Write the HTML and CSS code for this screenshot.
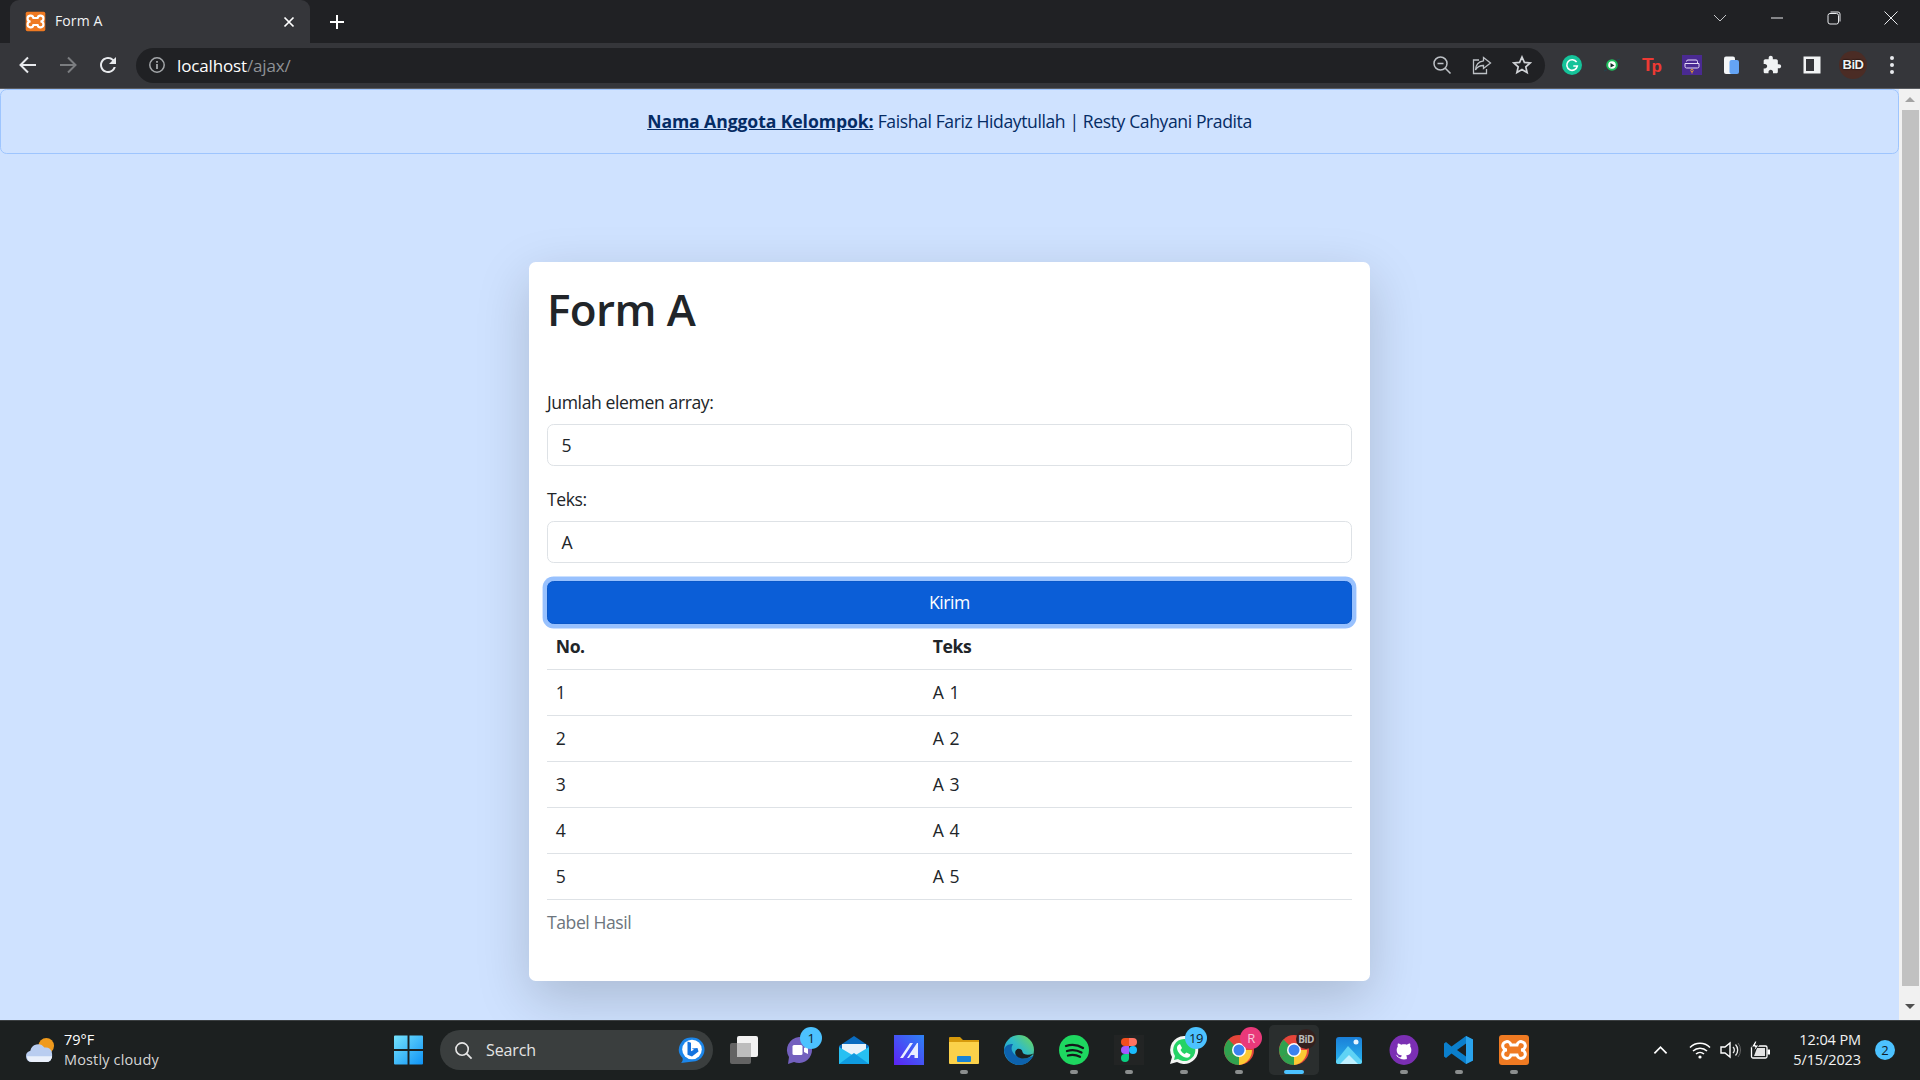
FILE: index.html
```html
<!DOCTYPE html>
<html lang="id">
<head>
<meta charset="utf-8">
<title>Form A</title>
<link rel="stylesheet" href="styles.css">
</head>
<body>
<header class="browser">
  <div class="tabstrip">
    <div class="tab">
      <svg class="favicon" viewBox="0 0 30 30"><rect x="1" y="1" width="28" height="28" rx="2.500" fill="#ef7a22"/><path d="M12 10H18A4.200 4.200 0 1 1 22 15 4.200 4.200 0 1 1 18 20H12A4.200 4.200 0 1 1 8 15 4.200 4.200 0 1 1 12 10Z" fill="none" stroke="#fff" stroke-width="3"/></svg>
      <span class="tab-title">Form A</span>
      <svg class="tab-close" viewBox="0 0 12 12"><path d="M1.500 1.500l9 9M10.500 1.500l-9 9" stroke="#fff" stroke-width="1.700"/></svg>
    </div>
    <svg class="new-tab" viewBox="0 0 16 16"><path d="M8 1v14M1 8h14" stroke="#fff" stroke-width="2"/></svg>
    <div class="win-controls">
      <svg class="win-ctl" viewBox="0 0 14 14"><path d="M1 4l6 6 6-6" fill="none" stroke="#c4c6c9" stroke-width="1"/></svg>
      <svg class="win-ctl" viewBox="0 0 14 14"><path d="M1 7h12" stroke="#e8eaed" stroke-width="1"/></svg>
      <svg class="win-ctl" viewBox="0 0 14 14"><rect x="1" y="2.500" width="10.500" height="10.500" rx="2" fill="none" stroke="#e8eaed"/><path d="M3.500 1h7.500a2 2 0 0 1 2 2v7.500" fill="none" stroke="#e8eaed"/></svg>
      <svg class="win-ctl" viewBox="0 0 14 14"><path d="M.5.5l13 13M13.500.5l-13 13" stroke="#e8eaed" stroke-width="1"/></svg>
    </div>
  </div>
  <div class="toolbar">
    <svg class="nav-icon" viewBox="0 0 24 24"><path d="M20 12H5M12 4.500L4.500 12l7.500 7.500" fill="none" stroke="#e8eaed" stroke-width="2"/></svg>
    <svg class="nav-icon" viewBox="0 0 24 24"><path d="M4 12h15M12 4.500l7.500 7.500-7.500 7.500" fill="none" stroke="#7b7d80" stroke-width="2"/></svg>
    <svg class="nav-icon" viewBox="0 0 24 24"><path d="M17.650 6.350A7.958 7.958 0 0 0 12 4c-4.420 0-7.990 3.580-7.990 8s3.570 8 7.990 8c3.730 0 6.840-2.550 7.730-6h-2.080A5.990 5.990 0 0 1 12 18c-3.310 0-6-2.690-6-6s2.690-6 6-6c1.660 0 3.140.690 4.220 1.780L13 11h7V4l-2.350 2.350z" fill="#e8eaed"/></svg>
    <div class="omnibox">
      <svg class="info" viewBox="0 0 18 18"><circle cx="9" cy="9" r="7.200" fill="none" stroke="#a4a7aa" stroke-width="1.500"/><path d="M9 8v5M9 5v1.800" stroke="#a4a7aa" stroke-width="1.800"/></svg>
      <span class="url"><span class="url-host">localhost</span>/ajax/</span>
      <div class="omni-actions">
        <svg class="omni-icon" viewBox="0 0 20 20"><circle cx="8.500" cy="8.500" r="6.500" fill="none" stroke="#bdc1c6" stroke-width="1.500"/><path d="M5.500 8.500h6M13.300 13.300l5.200 5.200" stroke="#bdc1c6" stroke-width="1.600"/></svg>
        <svg class="omni-icon" viewBox="0 0 20 20"><path d="M11.500 2.500l7 5.500-7 5.500V10.500C7.500 10.500 5 12 3.500 15c.2-5 3-8.500 8-9.200z" fill="none" stroke="#bdc1c6" stroke-width="1.300"/><path d="M7 5H1.500v13.500h13V14" fill="none" stroke="#bdc1c6" stroke-width="1.300"/></svg>
        <svg class="omni-icon" viewBox="0 0 20 20"><path d="M10 2l2.400 5.400 5.800.6-4.400 3.900 1.300 5.700L10 14.600l-5.100 3 1.300-5.700L1.800 8l5.800-.6z" fill="none" stroke="#d0d3d7" stroke-width="1.700"/></svg>
      </div>
    </div>
    <div class="extensions">
      <span class="ext"><svg viewBox="0 0 20 20"><circle cx="10" cy="10" r="10" fill="#15c39a"/><path d="M14.600 7.200A5.300 5.300 0 1 0 15.300 11h-4" fill="none" stroke="#fff" stroke-width="1.600"/></svg></span>
      <span class="ext"><svg viewBox="0 0 20 20"><circle cx="10" cy="10" r="5.800" fill="#1fbf5c"/><circle cx="10" cy="10" r="3.800" fill="#fff"/><path d="M8.500 8l4 2.500-4 2z" fill="#14302a"/><path d="M15 5l3-1M2 16l3-1" stroke="#27424c" stroke-width="1.200"/></svg></span>
      <span class="ext ext-tp"><span class="tp-t">T</span><span class="tp-p">p</span></span>
      <span class="ext"><svg viewBox="0 0 20 20"><rect width="20" height="20" fill="#4a2a92"/><path d="M4.500 6.500a1.500 1.500 0 0 1 1.500-1.500h8a1.500 1.500 0 0 1 1.500 1.500V8M3 8.500h14v3a1.500 1.500 0 0 1-1.500 1.500h-11A1.500 1.500 0 0 1 3 11.500z" fill="none" stroke="#e6dcf8" stroke-width="1"/><circle cx="10" cy="15.500" r="1.200" fill="none" stroke="#e39c33"/><path d="M10 16.500v2" stroke="#e39c33"/></svg></span>
      <span class="ext"><svg viewBox="0 0 20 20"><rect x="2" y="1.500" width="11" height="17.500" rx="2" fill="#f4f6f8"/><rect x="7.500" y="5" width="9.500" height="14" rx="2" fill="#64a4f5"/></svg></span>
      <span class="ext"><svg viewBox="0 0 24 24"><path d="M20.500 11H19V7c0-1.100-.9-2-2-2h-4V3.500C13 2.120 11.880 1 10.500 1S8 2.120 8 3.500V5H4c-1.100 0-1.990.9-1.990 2v3.800H3.500c1.490 0 2.700 1.210 2.700 2.700s-1.210 2.700-2.700 2.700H2V20c0 1.100.9 2 2 2h3.800v-1.500c0-1.490 1.210-2.700 2.700-2.700 1.490 0 2.700 1.210 2.700 2.700V22H17c1.100 0 2-.9 2-2v-4h1.500c1.380 0 2.500-1.120 2.500-2.500S21.880 11 20.500 11z" fill="#f1f3f4"/></svg></span>
      <span class="ext"><svg viewBox="0 0 20 20"><path fill-rule="evenodd" d="M1.500 1.500h17v17h-17zM4 4v12h8V4z" fill="#f1f3f4"/></svg></span>
      <span class="avatar">BiD</span>
      <svg class="ext-menu" viewBox="0 0 6 20"><circle cx="3" cy="3" r="2" fill="#e8eaed"/><circle cx="3" cy="10" r="2" fill="#e8eaed"/><circle cx="3" cy="17" r="2" fill="#e8eaed"/></svg>
    </div>
  </div>
</header>

<div class="viewport">
  <main class="page">
    <div class="alert"><a class="alert-link" href="#">Nama Anggota Kelompok:</a> Faishal Fariz Hidaytullah | Resty Cahyani Pradita</div>
    <section class="card">
      <h1 class="title">Form A</h1>
      <form class="form">
        <label class="label" for="jumlah">Jumlah elemen array:</label>
        <input class="input" id="jumlah" value="5">
        <label class="label" for="teks">Teks:</label>
        <input class="input input-last" id="teks" value="A">
        <button class="btn" type="button">Kirim</button>
      </form>
      <table class="table">
        <caption class="caption">Tabel Hasil</caption>
        <thead><tr><th class="col-no">No.</th><th>Teks</th></tr></thead>
        <tbody>
          <tr><td>1</td><td>A 1</td></tr>
          <tr><td>2</td><td>A 2</td></tr>
          <tr><td>3</td><td>A 3</td></tr>
          <tr><td>4</td><td>A 4</td></tr>
          <tr><td>5</td><td>A 5</td></tr>
        </tbody>
      </table>
    </section>
  </main>
  <aside class="scrollbar">
    <span class="arrow-up"></span>
    <span class="thumb"></span>
    <span class="arrow-down"></span>
  </aside>
</div>

<footer class="taskbar">
  <div class="weather">
    <svg class="weather-icon" viewBox="0 0 34 30"><circle cx="23" cy="10" r="8" fill="#f09a1c"/><path d="M8 27a6 6 0 0 1-1.500-11.800A8 8 0 0 1 21 12a6.500 6.500 0 0 1 8 6.500V21a6 6 0 0 1-6 6z" fill="#b9cdf0"/><path d="M3 21h26a6 6 0 0 1-6 6H8a6 6 0 0 1-5-6z" fill="#eaf0fb"/></svg>
    <div class="weather-text"><span class="temp">79°F</span><span class="cond">Mostly cloudy</span></div>
  </div>
  <div class="tb-app">
    <svg class="app-icon win" viewBox="0 0 30 30"><defs><linearGradient id="wg" x1="0" y1="0" x2="1" y2="1"><stop offset="0" stop-color="#76e3fd"/><stop offset="1" stop-color="#0f93f5"/></linearGradient></defs><path d="M0 1a1 1 0 0 1 1-1h13v14H0zM16 0h13a1 1 0 0 1 1 1v13H16zM0 16h14v14H1a1 1 0 0 1-1-1zM16 16h14v13a1 1 0 0 1-1 1H16z" fill="url(#wg)"/></svg>
  </div>
  <div class="search">
    <svg class="search-glass" viewBox="0 0 20 20"><circle cx="8.500" cy="8.500" r="6.500" fill="none" stroke="#e6e6e6" stroke-width="1.700"/><path d="M13 13l5.500 5.500" stroke="#e6e6e6" stroke-width="1.900"/></svg>
    <span class="search-text">Search</span>
    <svg class="bing" viewBox="0 0 28 28"><path d="M14 1.500a12 12 0 0 1 1 24c-4 .5-8 1-12 1.500 1.500-1.500 2-3 1.500-5A12 12 0 0 1 14 1.500z" fill="#1c86ea"/><circle cx="14" cy="13.500" r="9.800" fill="#fff"/><path d="M9.500 5.500l3.500 1.200v8.500l3-1.500-2.200-1.200 5.700-.5 1 3.500-6.500 5-4.500-1.800z" fill="#1373df"/></svg>
  </div>
  <div class="tb-apps">
    <div class="tb-app"><svg class="app-icon" viewBox="0 0 30 30"><rect x="8" y="1" width="21" height="21" rx="2" fill="#f2f2f2"/><rect x="1" y="8" width="21" height="21" rx="2" fill="#707070" fill-opacity=".85"/><rect x="8" y="8" width="14" height="14" fill="#bdbdbd"/></svg></div>
    <div class="tb-app"><svg class="app-icon" viewBox="0 0 30 30"><path d="M15 2a13 13 0 1 1-5 25l-6 2 1-7A13 13 0 0 1 15 2z" fill="#7360be"/><rect x="8.500" y="10" width="10" height="10" rx="1.500" fill="#fff"/><path d="M20 13l4-2v8l-4-2z" fill="#fff"/></svg><span class="badge badge-one">1</span></div>
    <div class="tb-app"><svg class="app-icon" viewBox="0 0 30 30"><path d="M15 1l15 10v18H0V11z" fill="#0a6cc0"/><path d="M3 9h24v8l-12 8-12-8z" fill="#e9f3fb"/><path d="M0 12l15 9 15-9v17H0z" fill="#27c0f2"/><path d="M0 29l15-11 15 11z" fill="#0f9be0"/></svg></div>
    <div class="tb-app"><svg class="app-icon" viewBox="0 0 30 30"><defs><linearGradient id="mg" x1="0" y1="1" x2="1" y2="0"><stop offset="0" stop-color="#5d22f5"/><stop offset="1" stop-color="#2d83f5"/></linearGradient></defs><rect width="30" height="30" fill="url(#mg)"/><path d="M6 23L16 8h3L9 23zM13 23L23 8h1v15h-3.500v-3h-3.500l-2 3z" fill="#e9efff"/></svg></div>
    <div class="tb-app"><svg class="app-icon" viewBox="0 0 30 30"><path d="M0 3a1 1 0 0 1 1-1h10l3 3h16v6H0z" fill="#d79a0c"/><path d="M0 7h30v21a1 1 0 0 1-1 1H1a1 1 0 0 1-1-1z" fill="#fbd14a"/><rect x="8" y="21" width="14" height="6" rx="1" fill="#1783d6"/></svg><span class="dot"></span></div>
    <div class="tb-app"><svg class="app-icon" viewBox="0 0 30 30"><defs><linearGradient id="eg" x1="0" y1="1" x2="1" y2="0"><stop offset="0" stop-color="#1d8fd8"/><stop offset=".55" stop-color="#30bcc8"/><stop offset="1" stop-color="#74d94f"/></linearGradient></defs><circle cx="15" cy="15" r="15" fill="url(#eg)"/><path d="M0 15C1 24 8 30 15 30c6 0 11-3 15-10-4 3-9 4-13 3C10 21 5 15 9 9 4 9 1 11 0 15z" fill="#0d62ad"/><path d="M29.500 18.500C25 20.500 19 20 18.500 17 18 13.500 13 12.500 11.500 16 10 20 14 23 18 23.500 23 24 27 22 29.500 18.500Z" fill="#1c2020"/></svg></div>
    <div class="tb-app"><svg class="app-icon" viewBox="0 0 30 30"><circle cx="15" cy="15" r="15" fill="#1ed760"/><path d="M7 11c6-2 12-1 17 2M8 16c5-1.500 10-1 14.500 1.500M9 20.500c4-1 8-.8 12 1.200" fill="none" stroke="#14181a" stroke-width="2.300" stroke-linecap="round"/></svg><span class="dot"></span></div>
    <div class="tb-app"><span class="figma-tile"><svg viewBox="0 0 16 24"><path d="M4 0h4v8H4a4 4 0 0 1 0-8z" fill="#f24e1e"/><path d="M8 0h4a4 4 0 0 1 0 8H8z" fill="#ff7262"/><path d="M4 8h4v8H4a4 4 0 0 1 0-8z" fill="#a259ff"/><circle cx="12" cy="12" r="4" fill="#1abcfe"/><path d="M4 16h4v4a4 4 0 1 1-4-4z" fill="#0acf83"/></svg></span><span class="dot"></span></div>
    <div class="tb-app"><svg class="app-icon" viewBox="0 0 30 30"><path d="M15 1a14 14 0 1 1-7 26l-7 2 2-7A14 14 0 0 1 15 1z" fill="#f4f6f4"/><path d="M15 4a11 11 0 1 1-6 20l-4 1 1-4A11 11 0 0 1 15 4z" fill="#25d366"/><path d="M11 9l2 4-1.500 2c1 2 2.500 3 4 4l2-1.500 4 2c-.5 3-3 3.500-5 3-4-1-8-5-8.500-9-.2-2 .9-4 3-4.500z" fill="#fff"/></svg><span class="badge badge-wa">19</span><span class="dot"></span></div>
    <div class="tb-app"><svg class="app-icon" viewBox="0 0 30 30"><circle cx="15" cy="15" r="15" fill="#e4453a"/><path d="M15 15L2 22.500A15 15 0 0 0 15 30z" fill="#30a24f"/><path d="M2 22.500A15 15 0 0 1 4.500 4.500L15 15z" fill="#30a24f"/><path d="M15 15l13 0A15 15 0 0 1 15 30z" fill="#fcc934"/><circle cx="15" cy="15" r="7" fill="#fff"/><circle cx="15" cy="15" r="5.500" fill="#3b82f0"/></svg><span class="badge badge-r">R</span><span class="dot"></span></div>
    <div class="tb-app tb-active"><svg class="app-icon" viewBox="0 0 30 30"><circle cx="15" cy="15" r="15" fill="#e4453a"/><path d="M15 15L2 22.500A15 15 0 0 0 15 30z" fill="#30a24f"/><path d="M2 22.500A15 15 0 0 1 4.500 4.500L15 15z" fill="#30a24f"/><path d="M15 15l13 0A15 15 0 0 1 15 30z" fill="#fcc934"/><circle cx="15" cy="15" r="7" fill="#fff"/><circle cx="15" cy="15" r="5.500" fill="#3b82f0"/></svg><span class="badge badge-bid">BiD</span><span class="dot dot-active"></span></div>
    <div class="tb-app"><svg class="app-icon" viewBox="0 0 30 30"><defs><linearGradient id="pg" x1="0" y1="0" x2="0" y2="1"><stop offset="0" stop-color="#1a7fd8"/><stop offset="1" stop-color="#2ab7f0"/></linearGradient></defs><rect x="2" y="2" width="26" height="27" rx="3" fill="url(#pg)"/><circle cx="22" cy="7" r="2.500" fill="#e8f5ff"/><path d="M2 26l12-15 14 15v1a2 2 0 0 1-2 2H4a2 2 0 0 1-2-2z" fill="#5fd3f5"/><path d="M6 29l9-9 9 9z" fill="#bff0ff"/></svg></div>
    <div class="tb-app"><svg class="app-icon" viewBox="0 0 30 30"><ellipse cx="15" cy="15" rx="14.500" ry="15" fill="#7b2fb3"/><circle cx="15" cy="15" r="9.500" fill="#fff"/><g transform="translate(3.500 3.500) scale(.96)"><path d="M12 .297c-6.630 0-12 5.373-12 12 0 5.303 3.438 9.800 8.205 11.385.6.113.82-.258.82-.577 0-.285-.01-1.040-.015-2.040-3.338.724-4.042-1.610-4.042-1.610C4.422 18.070 3.633 17.700 3.633 17.700c-1.087-.744.084-.729.084-.729 1.205.084 1.838 1.236 1.838 1.236 1.070 1.835 2.809 1.305 3.495.998.108-.776.417-1.305.760-1.605-2.665-.300-5.466-1.332-5.466-5.930 0-1.310.465-2.380 1.235-3.220-.135-.303-.54-1.523.105-3.176 0 0 1.005-.322 3.300 1.230.960-.267 1.980-.399 3-.405 1.020.006 2.040.138 3 .405 2.280-1.552 3.285-1.230 3.285-1.230.645 1.653.24 2.873.120 3.176.765.840 1.230 1.910 1.230 3.220 0 4.610-2.805 5.625-5.475 5.920.420.360.810 1.096.810 2.220 0 1.606-.015 2.896-.015 3.286 0 .315.210.690.825.570C20.565 22.092 24 17.592 24 12.297c0-6.627-5.373-12-12-12" fill="#7b2fb3"/></g></svg><span class="dot"></span></div>
    <div class="tb-app"><svg class="app-icon" viewBox="0 0 30 30"><path d="M22 1l7 3.500v21L22 29 7.500 18.500 2 23l-2-1.500v-13L2 7l5.500 4.500z" fill="#0b7fcc"/><path d="M22 8.500L13 15l9 6.500z" fill="#1c2020"/><path d="M22 1l7 3.500v21L22 29z" fill="#2aa3ec"/></svg><span class="dot"></span></div>
    <div class="tb-app"><svg class="app-icon" viewBox="0 0 30 30"><rect width="30" height="30" rx="3" fill="#ef7a22"/><path d="M12 10H18A4.200 4.200 0 1 1 22 15 4.200 4.200 0 1 1 18 20H12A4.200 4.200 0 1 1 8 15 4.200 4.200 0 1 1 12 10Z" fill="none" stroke="#fff" stroke-width="3"/></svg><span class="dot"></span></div>
  </div>
  <div class="tray">
    <svg class="tray-chevron" viewBox="0 0 16 10"><path d="M1.500 8.500L8 2l6.500 6.500" fill="none" stroke="#fff" stroke-width="1.800"/></svg>
    <svg class="tray-icon" viewBox="0 0 22 18"><path d="M1 6.500a14 14 0 0 1 20 0M4 10a10 10 0 0 1 14 0M7 13a6 6 0 0 1 8 0" fill="none" stroke="#fff" stroke-width="1.500"/><circle cx="11" cy="16" r="1.600" fill="#fff"/></svg>
    <svg class="tray-icon" viewBox="0 0 22 18"><path d="M2 6h4l5-4v14l-5-4H2z" fill="none" stroke="#fff" stroke-width="1.400"/><path d="M14 6a4 4 0 0 1 0 6M16.500 3.500a8 8 0 0 1 0 11" fill="none" stroke="#eee" stroke-width="1.300"/><path d="M19 2a11 11 0 0 1 0 14" fill="none" stroke="#666" stroke-width="1"/></svg>
    <svg class="tray-battery" viewBox="0 0 22 18"><rect x="2.500" y="5" width="15.500" height="12" rx="1.500" fill="#1c2020" stroke="#fff" stroke-width="1.300"/><path d="M5 15h11V7H8z" fill="#e4e4e4"/><rect x="18.500" y="8.500" width="2.500" height="5" fill="#fff"/><path d="M6 0L2.500 6H6l-1.500 5L10 4H6.500L8 0z" fill="#fff" stroke="#1c2020"/></svg>
    <div class="clock"><span>12:04 PM</span><span>5/15/2023</span></div>
    <span class="notif">2</span>
  </div>
</footer>
</body>
</html>
```
FILE: styles.css
```css
* { box-sizing: border-box; }
html, body { margin: 0; height: 100%; overflow: hidden; }
body {
  display: flex;
  flex-direction: column;
  height: 1080px;
  font-family: "Open Sans", "Noto Sans", sans-serif;
  background: #cfe2ff;
  color: #212529;
}

/* browser chrome */
.browser { flex: none; background: #35363a; }
.tabstrip {
  display: flex;
  align-items: center;
  height: 43px;
  padding-left: 10px;
  background: #202124;
}
.tab {
  display: flex;
  align-items: center;
  width: 300px;
  height: 43px;
  padding: 0 14px 0 15px;
  background: #35363a;
  border-radius: 9px 9px 0 0;
}
.favicon { width: 21px; height: 21px; flex: none; }
.tab-title { margin: 0 0 2px 9px; flex: 1; font-size: 14px; color: #f1f3f4; letter-spacing: 0.1px; }
.tab-close { width: 12px; height: 12px; flex: none; margin-right: 1px; }
.new-tab { width: 16px; height: 16px; margin-left: 19px; }
.win-controls { display: flex; align-items: center; margin-left: auto; margin-right: 22px; gap: 43px; padding-bottom: 7px; }
.win-ctl { width: 14px; height: 14px; display: block; }

.toolbar {
  display: flex;
  align-items: center;
  height: 46px;
  padding: 0 0 1px 16px;
  border-bottom: 1px solid #5b5d61;
}
.nav-icon { width: 24px; height: 24px; margin-right: 16px; flex: none; }
.nav-icon:nth-of-type(3) { margin-right: 16px; }
.omnibox {
  display: flex;
  align-items: center;
  width: 1409px;
  height: 35px;
  padding-left: 12px;
  background: #202124;
  border-radius: 18px;
}
.info { width: 18px; height: 18px; flex: none; }
.url { margin-left: 11px; font-size: 17px; color: #8f9296; letter-spacing: -0.15px; }
.url-host { color: #fff; }
.omni-actions { display: flex; align-items: center; gap: 20px; margin-left: auto; margin-right: 13px; }
.omni-icon { width: 20px; height: 20px; display: block; }
.extensions { display: flex; align-items: center; margin-left: 17px; }
.ext { width: 20px; height: 20px; margin-right: 20px; display: flex; align-items: center; justify-content: center; flex: none; }
.ext svg { width: 100%; height: 100%; display: block; }
.ext-tp { font-family: "Liberation Sans", sans-serif; font-weight: 700; color: #ee3a34; font-size: 19px; line-height: 20px; }
.tp-t { letter-spacing: -2px; }
.tp-p { font-size: 17px; padding-top: 4px; }
.avatar {
  width: 28px;
  height: 28px;
  margin-left: -3px;
  margin-right: 22px;
  flex: none;
  border-radius: 50%;
  background: #4b2c25;
  color: #f1f1f1;
  font: 700 13px/28px "Liberation Sans", sans-serif;
  text-align: center;
  letter-spacing: -0.5px;
  text-shadow: 0 0 1px #000, 0 0 2px #000;
}
.ext-menu { width: 6px; height: 20px; flex: none; }

/* page */
.viewport { flex: 1; display: flex; min-height: 0; }
.page { flex: 1; min-width: 0; }
.alert {
  height: 65px;
  padding-top: 18px;
  border: 1px solid #9ec5fe;
  border-radius: 6.6px;
  background: #cfe2ff;
  color: #052c65;
  font-size: 17.6px;
  line-height: 26.4px;
  letter-spacing: -0.41px;
  text-align: center;
}
.alert-link { color: #052c65; font-weight: 700; letter-spacing: -0.09px; }
.card {
  width: 841px;
  height: 719px;
  margin: 108px auto 0;
  padding: 0 18px;
  background: #fff;
  border-radius: 6.6px;
  box-shadow: 0 17.6px 52.8px rgba(0, 0, 0, .175);
}
.title {
  margin: 0;
  padding-top: 21px;
  height: 127px;
  font-size: 44px;
  font-weight: 600;
  line-height: 52.8px;
  letter-spacing: -0.6px;
}
.form { display: flex; flex-direction: column; }
.label { font-size: 17.6px; line-height: 26.4px; letter-spacing: -0.4px; margin-bottom: 8.8px; padding-bottom: 1px; height: 26.4px; }
.input {
  height: 42px;
  margin-bottom: 19.8px;
  padding: 0 13.4px;
  border: 1px solid #dee2e6;
  border-radius: 6.6px;
  font: inherit;
  font-size: 17.6px;
  color: #212529;
  background: #fff;
  outline: none;
}
.input-last { margin-bottom: 18px; }
.btn {
  height: 43px;
  padding: 0 0 1px;
  border: 1px solid #0a58ca;
  border-radius: 6.6px;
  background: #0b5ed7;
  color: #fff;
  font: inherit;
  font-size: 17.6px;
  letter-spacing: -0.45px;
  box-shadow: 0 0 0 4.4px rgba(49, 132, 253, .5);
}
.table {
  width: 100%;
  border-collapse: collapse;
  table-layout: fixed;
  font-size: 17.6px;
  line-height: 26.4px;
  letter-spacing: -0.45px;
  word-spacing: 2px;
  caption-side: bottom;
}
.table th, .table td {
  height: 46px;
  padding: 0 8.8px;
  border-bottom: 1px solid #dee2e6;
  text-align: left;
}
.table th { height: 45px; font-weight: 700; }
.col-no { width: 377px; }
.caption { padding-top: 9.5px; color: #6c757d; text-align: left; word-spacing: 0; }

/* scrollbar */
.scrollbar {
  flex: none;
  width: 21px;
  display: flex;
  flex-direction: column;
  align-items: center;
  padding: 0 0 0 1px;
  background: #f1f1f1;
}
.arrow-up, .arrow-down { width: 0; height: 0; border-left: 5px solid transparent; border-right: 5px solid transparent; flex: none; }
.arrow-up { margin-top: 8px; border-bottom: 5px solid #a3a3a3; }
.thumb { width: 17px; height: 876px; margin-top: 8px; background: #c1c1c1; flex: none; }
.arrow-down { margin-top: 18px; border-top: 5px solid #505050; }

/* taskbar */
.taskbar {
  flex: none;
  display: flex;
  align-items: center;
  height: 60px;
  padding-bottom: 1px;
  background: #1c2020;
  border-top: 1px solid #3b3f41;
  color: #fff;
}
.weather { display: flex; align-items: center; width: 383px; padding-left: 24px; }
.weather-icon { width: 33px; height: 29px; flex: none; }
.weather-text { display: flex; flex-direction: column; margin-left: 7px; padding-bottom: 1px; font-size: 14.5px; line-height: 20px; letter-spacing: -0.05px; }
.temp { color: #fff; }
.cond { color: #d6d6d6; letter-spacing: 0.15px; }
.tb-app {
  position: relative;
  display: flex;
  align-items: center;
  justify-content: center;
  width: 50px;
  height: 50px;
  flex: none;
}
.tb-apps { display: flex; gap: 5px; margin-left: 6px; }
.app-icon { width: 30px; height: 30px; display: block; }
.win { width: 29px; height: 30px; }
.search {
  display: flex;
  align-items: center;
  width: 273px;
  height: 40px;
  margin-left: 7px;
  padding: 0 7px 0 14px;
  background: #3a3e3e;
  border-radius: 20px;
}
.search-glass { width: 19px; height: 19px; flex: none; }
.search-text { margin-left: 13px; flex: 1; font-size: 16px; letter-spacing: -0.1px; color: #e4e4e4; }
.bing { width: 28px; height: 28px; flex: none; }
.figma-tile { width: 30px; height: 30px; padding: 3px 0; display: flex; justify-content: center; background: #222424; }
.figma-tile svg { width: 16px; height: 24px; }
.dot { position: absolute; bottom: 1px; left: 21px; width: 8px; height: 4px; border-radius: 2px; background: #8b8e8e; }
.dot-active { left: 15px; width: 20px; background: #4cc2ff; }
.tb-active { background: #2a2e2e; border-radius: 5px; }
.badge {
  position: absolute;
  top: 2px;
  right: 2px;
  width: 22px;
  height: 22px;
  border-radius: 50%;
  background: #4cc2ff;
  color: #10202a;
  font-size: 13px;
  line-height: 22px;
  text-align: center;
  letter-spacing: -0.5px;
}
.badge-r { background: #e9397a; color: #f6c9da; }
.badge-bid { top: 4px; right: 3px; background: #33201e; color: #bbb; font-size: 10px; font-weight: 700; width: 20px; height: 20px; line-height: 20px; }
.tray { display: flex; align-items: center; margin-left: auto; }
.tray-chevron { width: 15px; height: 10px; margin-right: 21px; }
.tray-icon { width: 22px; height: 18px; margin-right: 8px; }
.tray-battery { width: 22px; height: 18px; margin-right: 7px; }
.clock { display: flex; flex-direction: column; align-items: flex-end; width: 80px; margin-left: 3px; padding-bottom: 1px; font-size: 14.5px; line-height: 20px; letter-spacing: -0.1px; color: #f2f2f2; }
.notif {
  width: 20px;
  height: 20px;
  margin: 0 25px 0 14px;
  border-radius: 50%;
  background: #4cc2ff;
  color: #10202a;
  font-size: 13px;
  line-height: 20px;
  text-align: center;
}
```
